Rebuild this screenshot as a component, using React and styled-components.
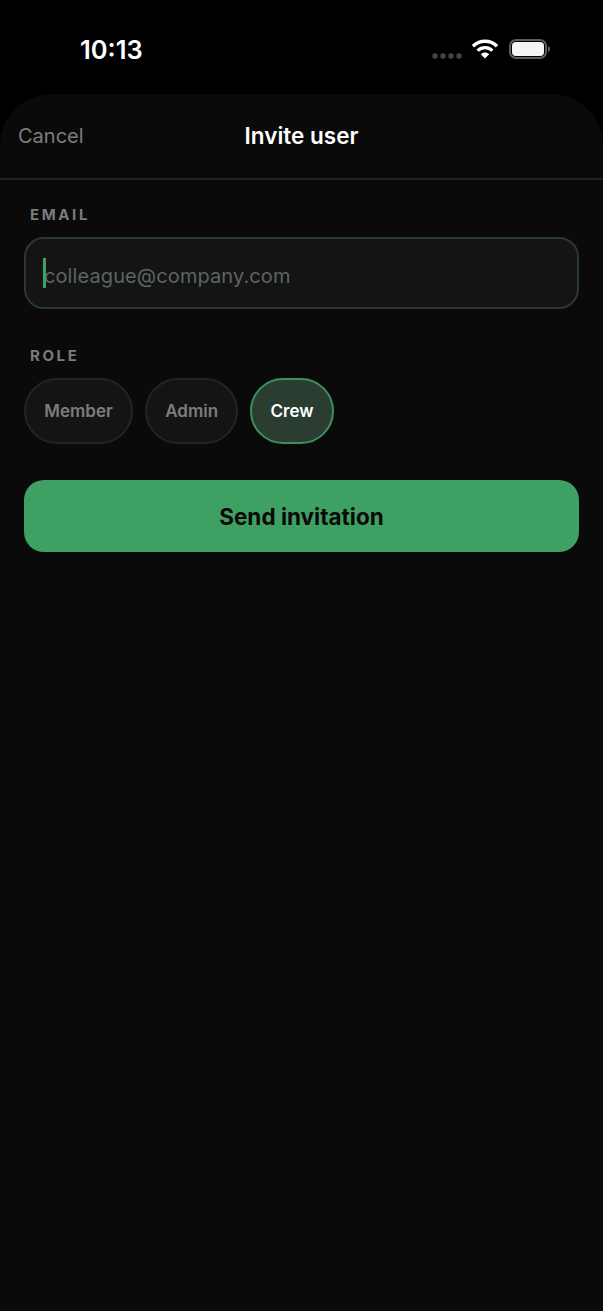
import React from 'react';
import styled, { createGlobalStyle } from 'styled-components';

const GlobalStyle = createGlobalStyle`
  html, body {
    margin: 0;
    padding: 0;
    background: #000;
    font-family: Inter, "Liberation Sans", sans-serif;
  }
  * { box-sizing: border-box; }
`;

const Screen = styled.div`
  width: 603px;
  height: 1311px;
  display: flex;
  flex-direction: column;
  background: #000;
  overflow: hidden;
`;

const StatusBar = styled.div`
  height: 94px;
  flex-shrink: 0;
  display: flex;
  justify-content: space-between;
  align-items: flex-start;
  padding: 34.5px 53px 0 80px;
`;

const Clock = styled.span`
  color: #fff;
  font-size: 25.5px;
  line-height: 29px;
  font-weight: 600;
`;

const StatusIcons = styled.div`
  display: flex;
  align-items: center;
  margin-top: 4.5px;
`;

const Sheet = styled.div`
  flex: 1;
  display: flex;
  flex-direction: column;
  background: #0a0a0a;
  border-radius: 52px 52px 0 0;
`;

const Header = styled.header`
  height: 86px;
  flex-shrink: 0;
  display: grid;
  grid-template-columns: 1fr auto 1fr;
  align-items: center;
  padding: 0 18px;
  border-bottom: 2px solid #232323;
`;

const Cancel = styled.button`
  justify-self: start;
  background: none;
  border: none;
  padding: 0;
  color: #7d7d7d;
  font: 400 20px Inter, "Liberation Sans", sans-serif;
`;

const Title = styled.h1`
  margin: 0 0 2px;
  color: #fff;
  font-size: 22.5px;
  font-weight: 600;
`;

const Form = styled.form`
  display: flex;
  flex-direction: column;
  padding: 26px 24px 0;
`;

const Label = styled.div`
  margin: 0 0 13px 6px;
  color: #7b7b7b;
  font-size: 15px;
  line-height: 18px;
  font-weight: 700;
  letter-spacing: 2.6px;
`;

const EmailField = styled.div`
  height: 72px;
  display: flex;
  align-items: center;
  position: relative;
  padding: 6px 0 0 18px;
  margin-bottom: 38px;
  background: #141414;
  border: 2px solid #283a2e;
  border-radius: 20px;
  color: #5c6660;
  font-size: 20px;
  letter-spacing: 0.1px;
`;

const Caret = styled.span`
  position: absolute;
  left: 17px;
  top: 19px;
  width: 3px;
  height: 30px;
  background: #3fa063;
`;

const Roles = styled.div`
  display: flex;
  gap: 12px;
  margin-bottom: 36px;
`;

const RoleChip = styled.button`
  height: 66px;
  padding: 0 18.25px;
  border-radius: 33px;
  border: 2px solid ${(p) => (p.$active ? '#3a9159' : '#242424')};
  background: ${(p) => (p.$active ? '#2b3d31' : '#141414')};
  color: ${(p) => (p.$active ? '#fff' : '#7d7d7d')};
  font: 600 17px Inter, "Liberation Sans", sans-serif;
`;

const SendButton = styled.button`
  height: 72px;
  border: none;
  border-radius: 20px;
  background: #3fa063;
  color: #0a0a0a;
  font: 700 22.5px Inter, "Liberation Sans", sans-serif;
`;

const SignalDots = () => (
  <svg width="30" height="6" viewBox="0 0 30 6" style={{ marginTop: 14, marginRight: 10 }}>
    {[3, 11, 19, 27].map((x) => (
      <circle key={x} cx={x} cy="3" r="2.8" fill="#3a463e" />
    ))}
  </svg>
);

const WifiIcon = () => (
  <svg width="26" height="20" viewBox="0 0 26 20" style={{ marginRight: 11 }}>
    <path d="M1 7.2C7.8 0.6 18.2 0.6 25 7.2" fill="none" stroke="#fff" strokeWidth="3.4" />
    <path d="M5.6 11.6C9.9 7.6 16.1 7.6 20.4 11.6" fill="none" stroke="#fff" strokeWidth="3.2" />
    <path d="M8.8 15.2C11.3 13 14.7 13 17.2 15.2L13 19.6Z" fill="#fff" />
  </svg>
);

const BatteryIcon = () => (
  <svg width="41" height="20" viewBox="0 0 41 20">
    <rect x="1" y="1" width="36" height="18" rx="6" fill="none" stroke="#59605b" strokeWidth="2" />
    <rect x="3" y="3" width="32" height="14" rx="4" fill="#f4f4f4" />
    <path d="M39 7C40.4 7.4 41 8.6 41 10C41 11.4 40.4 12.6 39 13Z" fill="#59605b" />
  </svg>
);

export default function App() {
  return (
    <Screen>
      <GlobalStyle />
      <StatusBar>
        <Clock>10:13</Clock>
        <StatusIcons>
          <SignalDots />
          <WifiIcon />
          <BatteryIcon />
        </StatusIcons>
      </StatusBar>
      <Sheet>
        <Header>
          <Cancel type="button">Cancel</Cancel>
          <Title>Invite user</Title>
        </Header>
        <Form>
          <Label>EMAIL</Label>
          <EmailField>
            <Caret />
            colleague@company.com
          </EmailField>
          <Label>ROLE</Label>
          <Roles>
            <RoleChip type="button">Member</RoleChip>
            <RoleChip type="button">Admin</RoleChip>
            <RoleChip type="button" $active>Crew</RoleChip>
          </Roles>
          <SendButton type="button">Send invitation</SendButton>
        </Form>
      </Sheet>
    </Screen>
  );
}
